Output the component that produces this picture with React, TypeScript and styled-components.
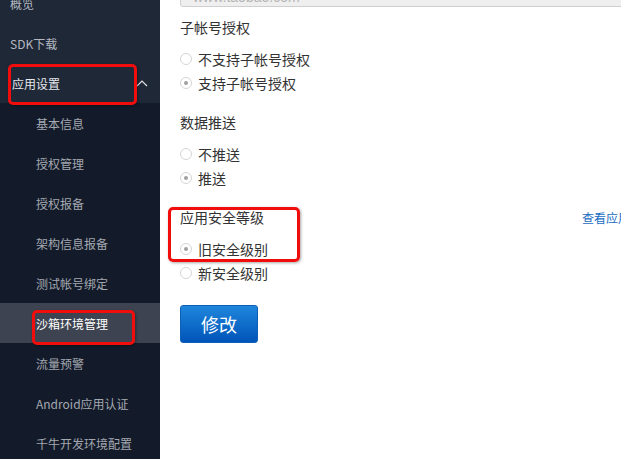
import React from 'react'
import styled, { createGlobalStyle } from 'styled-components'

const GlobalStyle = createGlobalStyle`
  html, body {
    margin: 0;
    padding: 0;
    overflow: hidden;
    background: #fff;
    font-family: 'Noto Sans CJK SC', 'Noto Sans', sans-serif;
  }
`

const Page = styled.div`
  display: flex;
  width: 621px;
  height: 459px;
  overflow: hidden;
`

const Sidebar = styled.nav`
  width: 160px;
  flex-shrink: 0;
  background: #131b2a;
  overflow: hidden;
`

const MenuList = styled.div`
  margin-top: -17px;
  display: flex;
  flex-direction: column;
`

const TopItem = styled.div<{ $bright?: boolean }>`
  position: relative;
  height: 40px;
  display: flex;
  align-items: center;
  justify-content: space-between;
  padding: 0 12px 0 10px;
  background: #1f2837;
  color: ${p => (p.$bright ? '#e6e8ec' : '#b4b8c0')};
  font-size: 12px;
`

const SubItem = styled.div<{ $active?: boolean }>`
  position: relative;
  height: 40px;
  display: flex;
  align-items: center;
  padding-left: 36px;
  background: ${p => (p.$active ? '#3d4350' : 'transparent')};
  color: ${p => (p.$active ? '#ffffff' : '#a3a8b0')};
  font-size: 12px;
`

const Mark = styled.div<{ $l: number; $t: number; $w: number; $h: number }>`
  position: absolute;
  left: ${p => p.$l}px;
  top: ${p => p.$t}px;
  width: ${p => p.$w}px;
  height: ${p => p.$h}px;
  box-sizing: border-box;
  border: 3px solid #f20d0d;
  border-radius: 5px;
  box-shadow: 1px 1px 3px rgba(0, 0, 0, 0.35);
  pointer-events: none;
`

const Main = styled.main`
  flex: 1;
  overflow: hidden;
`

const Form = styled.div`
  width: 522px;
  padding-left: 20px;
  display: flex;
  flex-direction: column;
`

const UrlInput = styled.div`
  margin-top: -23px;
  height: 30px;
  box-sizing: border-box;
  border: 1px solid #cfcfcf;
  border-radius: 3px;
  background: #efefef;
  color: #b5b5b5;
  font-size: 14px;
  font-family: 'Liberation Sans', sans-serif;
  padding: 0 12px 0 12px;
  line-height: 38px;
  overflow: hidden;
`

const Section = styled.div`
  position: relative;
  margin-top: 10px;
  margin-bottom: 7px;
`

const TitleRow = styled.div`
  height: 20px;
  display: flex;
  align-items: center;
  justify-content: space-between;
  margin-bottom: 10px;
`

const Title = styled.div`
  font-size: 14px;
  color: #333;
`

const HelpLink = styled.a`
  font-size: 12px;
  color: #1a6cc2;
  text-decoration: none;
  width: 120px;
  white-space: nowrap;
`

const RadioRow = styled.label`
  height: 24px;
  display: flex;
  align-items: center;
  gap: 6px;
  font-size: 14px;
  color: #333;
`

const RadioDot = styled.span<{ $checked?: boolean }>`
  width: 12px;
  height: 12px;
  box-sizing: border-box;
  border: 1px solid #d6d6d6;
  border-radius: 50%;
  background: #fff;
  display: flex;
  align-items: center;
  justify-content: center;

  &::after {
    content: '';
    width: 4px;
    height: 4px;
    border-radius: 50%;
    background: ${p => (p.$checked ? '#a0a0a0' : 'transparent')};
  }
`

const SubmitButton = styled.button`
  margin-top: 13px;
  width: 78px;
  height: 38px;
  border: 1px solid #0d5fb5;
  border-radius: 3px;
  background: linear-gradient(#1f86dc, #0054b8);
  color: #fff;
  font-size: 18px;
  font-family: 'Noto Sans CJK SC', sans-serif;
  padding: 0;
`

const Chevron = () => (
  <svg width="12" height="8" viewBox="0 0 12 8">
    <polyline points="1,7 6,2 11,7" fill="none" stroke="#e0e3e8" strokeWidth="1.2" />
  </svg>
)

const subItems = [
  '基本信息',
  '授权管理',
  '授权报备',
  '架构信息报备',
  '测试帐号绑定',
  '沙箱环境管理',
  '流量预警',
  'Android应用认证',
  '千牛开发环境配置',
]

type Option = { label: string; checked?: boolean }

const sections: { title: string; options: Option[]; link?: string; marked?: boolean }[] = [
  { title: '子帐号授权', options: [{ label: '不支持子帐号授权' }, { label: '支持子帐号授权', checked: true }] },
  { title: '数据推送', options: [{ label: '不推送' }, { label: '推送', checked: true }] },
  {
    title: '应用安全等级',
    link: '查看应用安全等级说明',
    marked: true,
    options: [{ label: '旧安全级别', checked: true }, { label: '新安全级别' }],
  },
]

export default function App() {
  return (
    <>
      <GlobalStyle />
      <Page>
        <Sidebar>
          <MenuList>
            <TopItem>概览</TopItem>
            <TopItem>SDK下载</TopItem>
            <TopItem $bright>
              <span style={{ marginLeft: 2 }}>应用设置</span>
              <Chevron />
              <Mark $l={8} $t={1} $w={129} $h={41} />
            </TopItem>
            {subItems.map(name => (
              <SubItem key={name} $active={name === '沙箱环境管理'}>
                {name}
                {name === '沙箱环境管理' && <Mark $l={32} $t={7} $w={103} $h={35} />}
              </SubItem>
            ))}
          </MenuList>
        </Sidebar>
        <Main>
          <Form>
            <UrlInput>www.taobao.com</UrlInput>
            {sections.map(s => (
              <Section key={s.title}>
                <TitleRow>
                  <Title>{s.title}</Title>
                  {s.link && <HelpLink href="#">{s.link}</HelpLink>}
                </TitleRow>
                {s.options.map(o => (
                  <RadioRow key={o.label}>
                    <RadioDot $checked={o.checked} />
                    {o.label}
                  </RadioRow>
                ))}
                {s.marked && <Mark $l={-12} $t={0} $w={132} $h={55} />}
              </Section>
            ))}
            <div>
              <SubmitButton>修改</SubmitButton>
            </div>
          </Form>
        </Main>
      </Page>
    </>
  )
}
